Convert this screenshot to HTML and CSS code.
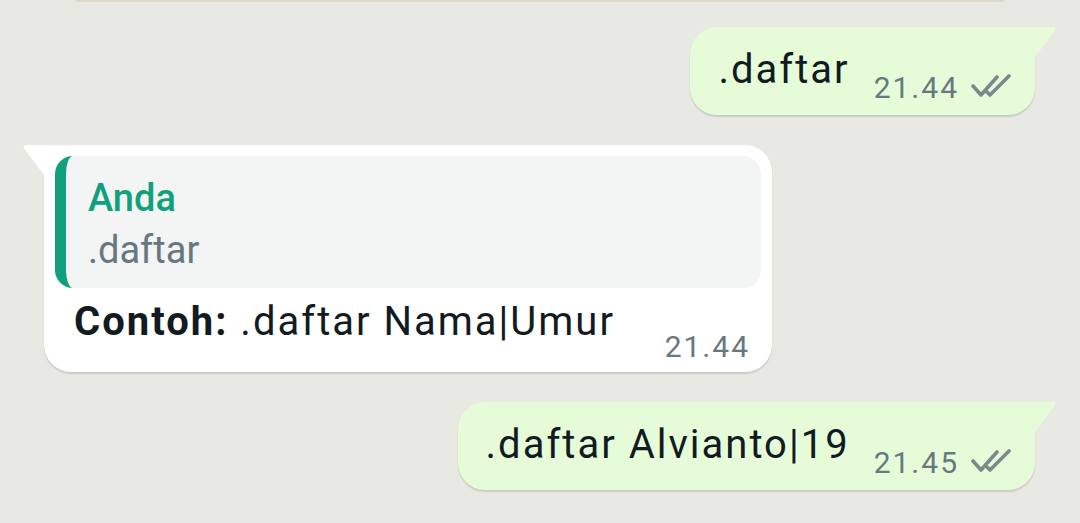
FILE: index.html
```html
<!DOCTYPE html>
<html>
<head>
<meta charset="utf-8">
<link rel="stylesheet" href="styles.css">
</head>
<body>
<div class="chat">
  <div class="prev"></div>

  <div class="row out">
    <div class="bubble bubble-out">
      <svg class="tail tail-out" viewBox="0 0 22 30" width="22" height="30"><path d="M0 0 H17 Q22 0 19.5 4 L0 30 Z"/></svg>
      <span class="text">.daftar</span>
      <span class="meta"><span class="time">21.44</span><svg class="ticks" viewBox="0 0 44 26" width="44" height="26"><path d="M2 13 L10 22 L26 4 M16 19 L19 22 L38 3"/></svg></span>
    </div>
  </div>

  <div class="row in">
    <div class="bubble bubble-in">
      <svg class="tail tail-in" viewBox="0 0 22 30" width="22" height="30"><path d="M22 0 H5 Q0 0 2.5 4 L22 30 Z"/></svg>
      <div class="quote">
        <div class="quote-name">Anda</div>
        <div class="quote-text">.daftar</div>
      </div>
      <div class="line">
        <span class="text"><b>Contoh:</b> .daftar Nama|Umur</span>
        <span class="meta"><span class="time">21.44</span></span>
      </div>
    </div>
  </div>

  <div class="row out">
    <div class="bubble bubble-out">
      <svg class="tail tail-out" viewBox="0 0 22 30" width="22" height="30"><path d="M0 0 H17 Q22 0 19.5 4 L0 30 Z"/></svg>
      <span class="text">.daftar Alvianto|19</span>
      <span class="meta"><span class="time">21.45</span><svg class="ticks" viewBox="0 0 44 26" width="44" height="26"><path d="M2 13 L10 22 L26 4 M16 19 L19 22 L38 3"/></svg></span>
    </div>
  </div>
</div>
</body>
</html>
```

FILE: styles.css
```css
html, body {
  margin: 0;
  padding: 0;
  height: 523px;
  overflow: hidden;
  background: #e8e9e3;
  font-family: Roboto, "Noto Sans", sans-serif;
}

.chat {
  display: flex;
  flex-direction: column;
}

.prev {
  height: 2px;
  margin: 0 75px;
  background: #ded8cb;
  border-radius: 0 0 2px 2px;
  margin-bottom: 25px;
}

.row {
  display: flex;
}

.row.out {
  justify-content: flex-end;
  padding-right: 45px;
}

.row.in {
  justify-content: flex-start;
  padding-left: 44px;
  margin: 30px 0;
}

.bubble {
  position: relative;
  box-shadow: 0 1.5px 1.5px rgba(0, 0, 0, 0.13);
}

.bubble-out {
  display: flex;
  align-items: flex-end;
  background: #e6fcd8;
  border-radius: 27px 0 27px 27px;
  padding: 18px 20px 9px 28px;
}

.bubble-in {
  background: #ffffff;
  border-radius: 0 27px 27px 27px;
  padding: 11px 11px 7px 11px;
  width: 706px;
}

.tail {
  position: absolute;
  top: 0;
}

.tail-out {
  left: 100%;
  fill: #e6fcd8;
}

.tail-in {
  right: 100%;
  fill: #ffffff;
}

.text {
  font-size: 40px;
  line-height: 50px;
  letter-spacing: 2px;
  color: #111b21;
  margin-bottom: 11px;
}

.text b {
  font-weight: 700;
}

.meta {
  display: flex;
  align-items: center;
  margin-left: 24px;
  height: 36px;
}

.time {
  font-size: 30px;
  line-height: 36px;
  letter-spacing: 2px;
  color: #687880;
}

.ticks {
  margin-left: 12px;
  margin-top: -4px;
  fill: none;
  stroke: #7b898d;
  stroke-width: 3.6;
  stroke-linecap: round;
  stroke-linejoin: round;
}

.quote {
  background: #f3f5f4;
  border-radius: 18px;
  border-left: 11px solid #11a07c;
  padding: 16px 20px 12px 22px;
}

.quote-name {
  font-size: 38px;
  line-height: 52px;
  font-weight: 500;
  color: #11a07c;
}

.quote-text {
  font-size: 38px;
  line-height: 52px;
  color: #667781;
}

.line {
  display: flex;
  align-items: flex-end;
  justify-content: space-between;
  padding: 0 11px 0 19px;
  margin-top: 9px;
}

.line .text {
  margin-bottom: 18px;
}
```
